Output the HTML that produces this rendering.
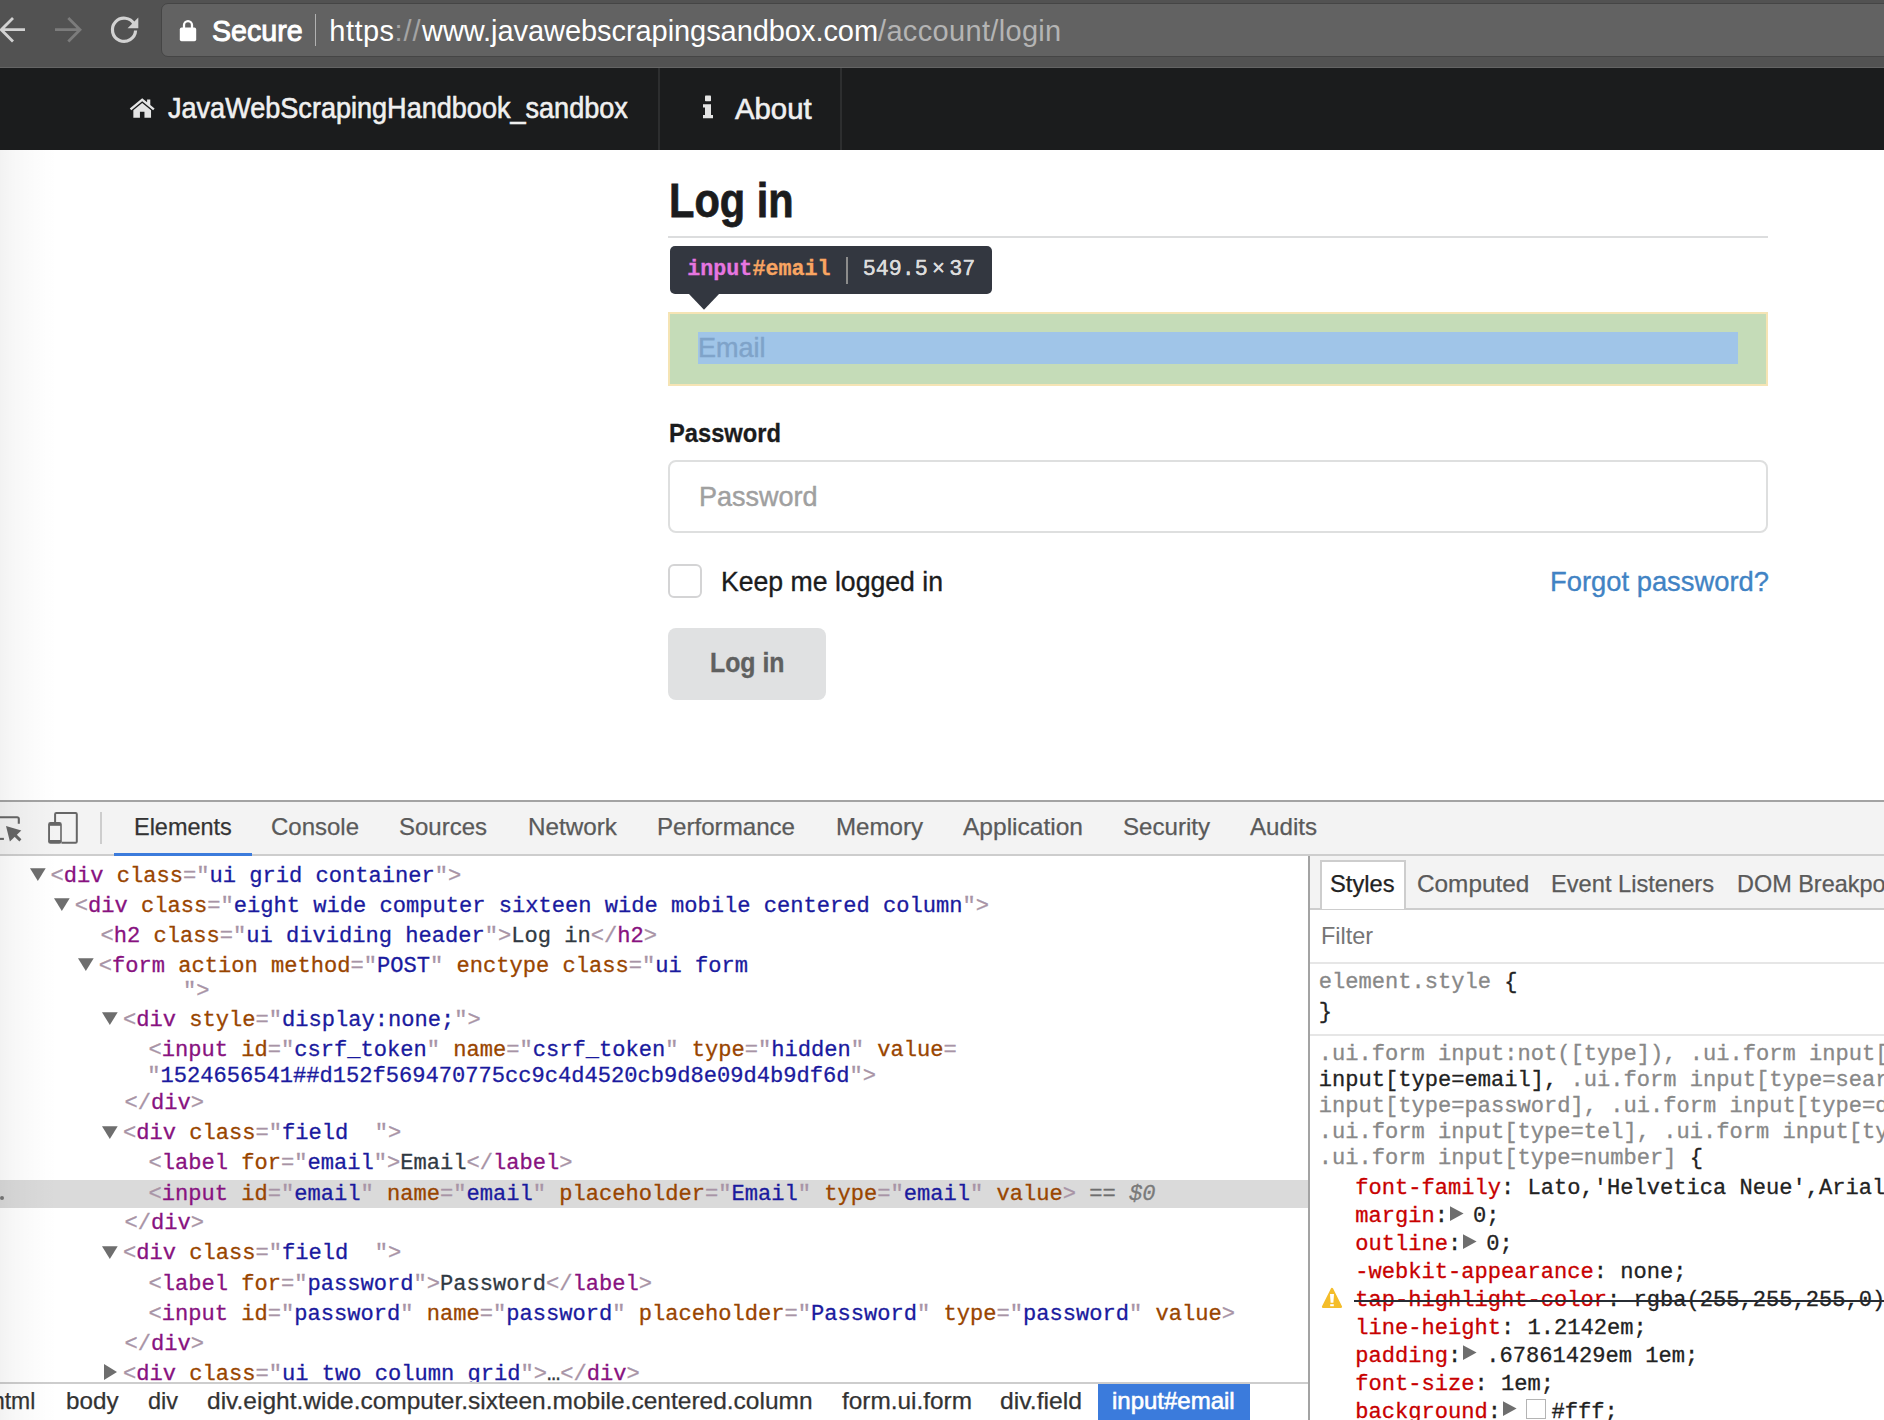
<!DOCTYPE html>
<html><head><meta charset="utf-8"><title>Log in</title>
<style>
html,body{margin:0;padding:0;background:#fff;width:1884px;height:1420px;overflow:hidden;}
body{position:relative;font-family:"Liberation Sans",sans-serif;}
#root{position:absolute;left:0;top:0;width:1884px;height:1420px;overflow:hidden;background:#fff;}
.t{position:absolute;white-space:pre;transform-origin:0 50%;}
.b{position:absolute;box-sizing:border-box;}
.s{font-family:"Liberation Sans",sans-serif;}
.m{font-family:"Liberation Mono",monospace;-webkit-text-stroke-width:0.3px;}
svg{position:absolute;overflow:visible;}
.p{color:#a894a6}.n{color:#881280}.a{color:#994500}.v{color:#1a1a9e}.x{color:#303942}
.g{color:#888}.r{color:#c80000}.k{color:#222}
</style></head><body><div id="root">

<div class="b" style="left:0px;top:0px;width:1884px;height:68px;background:#525252;"></div>
<div class="b" style="left:0px;top:66.5px;width:1884px;height:1.5px;background:#646464;"></div>
<div class="b" style="left:161px;top:3.2px;width:1740px;height:53.4px;background:#626262;border:1.6px solid #454545;border-radius:7px;"></div>
<svg style="left:0;top:0" width="160" height="68" viewBox="0 0 160 68" fill="none" stroke-linecap="butt" stroke-linejoin="miter"><path d="M25 29.7H1.5M13 18L1.3 29.7L13 41.4" stroke="#d2d2d2" stroke-width="2.8"/><path d="M55 29.7H79.5M68.3 18L80 29.7L68.3 41.4" stroke="#7c7c7c" stroke-width="2.8"/><path d="M134.2 24.2A11.6 11.6 0 1 0 135.6 30.5" stroke="#d2d2d2" stroke-width="3.2"/><path d="M138.3 17.6V28.3H127.6Z" fill="#d2d2d2" stroke="none"/></svg>
<svg style="left:176px;top:16px" width="24" height="28" viewBox="0 0 24 28"><rect x="3.8" y="11.6" width="16.4" height="13.6" rx="1.8" fill="#fff"/><path d="M8 12.5V9.1a4 4 0 0 1 8 0V12.5" fill="none" stroke="#fff" stroke-width="2.3"/></svg>
<div class="t s" style="left:211.7px;top:12.25px;line-height:38px;font-size:29px;color:#fff;transform:scaleX(0.9860);-webkit-text-stroke:0.95px #fff;">Secure</div>
<div class="b" style="left:314.9px;top:14px;width:1.4px;height:32px;background:#b2b2b2;"></div>
<div class="t s" style="left:329.3px;top:12.45px;line-height:38px;font-size:29px;color:#fff;letter-spacing:0.45px;">https</div>
<div class="t s" style="left:394.5px;top:12.45px;line-height:38px;font-size:29px;color:#a4a4a4;letter-spacing:1.0px;">://</div>
<div class="t s" style="left:422px;top:12.45px;line-height:38px;font-size:29px;color:#fff;letter-spacing:-0.06px;">www.javawebscrapingsandbox.com</div>
<div class="t s" style="left:878px;top:12.45px;line-height:38px;font-size:29px;color:#b4b4b4;letter-spacing:0.33px;">/account/login</div>
<div class="b" style="left:0px;top:68px;width:1884px;height:82px;background:#1b1c1d;"></div>
<div class="b" style="left:658px;top:68px;width:2px;height:82px;background:#2d2e2f;"></div>
<div class="b" style="left:840px;top:68px;width:2px;height:82px;background:#2d2e2f;"></div>
<svg style="left:128.6px;top:96.6px" width="26.4" height="22.6" viewBox="0 0 28 24"><path d="M14 1.2L0.8 12.2L2.4 14L14 4.4L25.6 14L27.2 12.2L22.6 8.4V2.6H19.2V5.6Z" fill="#e4e4e4"/><path d="M14 6.4L4.6 14.2V22H11.6V15.6H16.4V22H23.4V14.2Z" fill="#e4e4e4"/></svg>
<div class="t s" style="left:167.7px;top:90.29px;line-height:37px;font-size:28.6px;color:#f0f0f0;transform:scaleX(0.9463);-webkit-text-stroke:0.6px #f0f0f0;">JavaWebScrapingHandbook_sandbox</div>
<svg style="left:702px;top:95px" width="12" height="24" viewBox="0 0 12 24"><rect x="3" y="0.6" width="6" height="5.6" rx="0.8" fill="#e4e4e4"/><path d="M1 9.2H9V20H11V23.3H1V20H3V12.4H1Z" fill="#e4e4e4"/></svg>
<div class="t s" style="left:734.6px;top:89.55px;line-height:38px;font-size:29.3px;color:#f0f0f0;transform:scaleX(1.0005);-webkit-text-stroke:0.6px #f0f0f0;">About</div>
<div class="t s" style="left:669.4px;top:170.37px;line-height:62px;font-size:48px;color:#1b1c1d;font-weight:bold;transform:scaleX(0.8656);-webkit-text-stroke:0.8px #1b1c1d;">Log in</div>
<div class="b" style="left:668px;top:236px;width:1100px;height:2px;background:#dcddde;"></div>
<div class="b" style="left:670px;top:246px;width:322px;height:48px;background:#333740;border-radius:5px;"></div>
<svg style="left:688px;top:293px" width="32" height="17" viewBox="0 0 32 17"><path d="M0 0H32L16 16.7Z" fill="#333740"/></svg>
<div class="t m" style="left:687.3px;top:256.41px;line-height:28px;font-size:21.7px;color:#000;font-weight:bold;"><span style="color:#e776e0">input</span><span style="color:#f9a562">#email</span></div>
<div class="b" style="left:846px;top:256.5px;width:2px;height:27px;background:#8c8c8c;"></div>
<div class="t m" style="left:862.7px;top:256.41px;line-height:28px;font-size:21.7px;color:#dcdcdc;text-shadow:0 0 0.5px #dcdcdc;">549.5<span style="display:inline-block;margin:0 4.2px">&times;</span>37</div>
<div class="b" style="left:668px;top:312.1px;width:1100px;height:73.8px;background:#f5e4b4;"></div>
<div class="b" style="left:670px;top:314px;width:1096px;height:70.2px;background:#c5dcb8;"></div>
<div class="b" style="left:698px;top:332px;width:1040px;height:32px;background:#a0c5e8;"></div>
<div class="t s" style="left:698.4px;top:329.80px;line-height:36px;font-size:28px;color:#7fa3c9;transform:scaleX(0.9655);-webkit-text-stroke:0.45px #7fa3c9;">Email</div>
<div class="t s" style="left:668.6px;top:416.39px;line-height:34px;font-size:26px;color:#1b1c1d;font-weight:bold;transform:scaleX(0.9118);-webkit-text-stroke:0.3px #1b1c1d;">Password</div>
<div class="b" style="left:668px;top:460px;width:1100px;height:73px;background:#fff;border:2px solid #dedfdf;border-radius:8px;"></div>
<div class="t s" style="left:699.3px;top:479.00px;line-height:36px;font-size:28px;color:#a0a0a0;transform:scaleX(0.9647);-webkit-text-stroke:0.45px #a0a0a0;">Password</div>
<div class="b" style="left:668px;top:564.2px;width:33.8px;height:33.5px;background:#fff;border:2px solid #d4d4d5;border-radius:6px;"></div>
<div class="t s" style="left:721px;top:563.60px;line-height:36px;font-size:28px;color:#1b1c1d;transform:scaleX(0.9507);-webkit-text-stroke:0.35px #1b1c1d;">Keep me logged in</div>
<div class="t s" style="left:1550px;top:563.60px;line-height:36px;font-size:28px;color:#4183c4;transform:scaleX(0.9772);-webkit-text-stroke:0.35px #4183c4;">Forgot password?</div>
<div class="b" style="left:668px;top:628px;width:158px;height:72px;background:#e0e1e2;border-radius:8px;"></div>
<div class="t s" style="left:710px;top:645.30px;line-height:36px;font-size:28px;color:#5f6060;font-weight:bold;transform:scaleX(0.8871);-webkit-text-stroke:0.35px #5f6060;">Log in</div>
<div class="b" style="left:0px;top:800px;width:1884px;height:2px;background:#a3a3a3;"></div>
<div class="b" style="left:0px;top:802px;width:1884px;height:52px;background:#f3f3f3;"></div>
<div class="b" style="left:0px;top:854px;width:1884px;height:2px;background:#cdcdcd;"></div>
<svg style="left:0;top:800px" width="120" height="60" viewBox="0 0 120 60" fill="none"><path d="M0 17.2H17.2a1.6 1.6 0 0 1 1.6 1.6V23.8" stroke="#666" stroke-width="2.1"/><path d="M0 38.9H3.9" stroke="#666" stroke-width="2.1"/><path d="M6 26.1L21.3 30.6L9.9 41.4Z" fill="#666"/><path d="M13.5 33.6L20.4 40.4" stroke="#666" stroke-width="2.9"/><path d="M55.1 22.5V14.2a1.2 1.2 0 0 1 1.2-1.2H75.6a1.2 1.2 0 0 1 1.2 1.2V41.6a1.2 1.2 0 0 1-1.2 1.2H61.5" stroke="#666" stroke-width="2"/><rect x="48.1" y="22" width="13.7" height="21.8" rx="2.4" fill="#666"/><rect x="50" y="25.8" width="10.2" height="14.2" fill="#f3f3f3"/></svg>
<div class="b" style="left:99.9px;top:812px;width:2px;height:32px;background:#cdcdcd;"></div>
<div class="t s" style="left:134px;top:811.38px;line-height:31px;font-size:24px;color:#333;transform:scaleX(0.9775);-webkit-text-stroke-width:0.25px;">Elements</div>
<div class="t s" style="left:271px;top:811.38px;line-height:31px;font-size:24px;color:#5a5a5a;transform:scaleX(0.9993);-webkit-text-stroke-width:0.25px;">Console</div>
<div class="t s" style="left:399px;top:811.38px;line-height:31px;font-size:24px;color:#5a5a5a;transform:scaleX(0.9995);-webkit-text-stroke-width:0.25px;">Sources</div>
<div class="t s" style="left:528px;top:811.38px;line-height:31px;font-size:24px;color:#5a5a5a;transform:scaleX(1.0110);-webkit-text-stroke-width:0.25px;">Network</div>
<div class="t s" style="left:657px;top:811.38px;line-height:31px;font-size:24px;color:#5a5a5a;transform:scaleX(1.0044);-webkit-text-stroke-width:0.25px;">Performance</div>
<div class="t s" style="left:836px;top:811.38px;line-height:31px;font-size:24px;color:#5a5a5a;transform:scaleX(1.0038);-webkit-text-stroke-width:0.25px;">Memory</div>
<div class="t s" style="left:963px;top:811.38px;line-height:31px;font-size:24px;color:#5a5a5a;transform:scaleX(1.0220);-webkit-text-stroke-width:0.25px;">Application</div>
<div class="t s" style="left:1123px;top:811.38px;line-height:31px;font-size:24px;color:#5a5a5a;transform:scaleX(1.0034);-webkit-text-stroke-width:0.25px;">Security</div>
<div class="t s" style="left:1250px;top:811.38px;line-height:31px;font-size:24px;color:#5a5a5a;transform:scaleX(1.0045);-webkit-text-stroke-width:0.25px;">Audits</div>
<div class="b" style="left:114px;top:852.8px;width:138px;height:3.2px;background:#3b7bdc;"></div>
<div class="b" style="left:0px;top:1180px;width:1308px;height:28px;background:#dadada;"></div>
<div class="b" style="left:0px;top:1196px;width:4px;height:4px;background:#777;border-radius:2px;"></div>
<svg style="left:30.2px;top:868.2px" width="15.7" height="13.4" viewBox="0 0 16 13"><path d="M0 0H16L8 13Z" fill="#6e6e6e"/></svg>
<div class="t m" style="left:50.4px;top:861.92px;line-height:29px;font-size:22.09px;color:#000;"><span class="p">&lt;</span><span class="n">div</span> <span class="a">class</span><span class="p">=&quot;</span><span class="v">ui grid container</span><span class="p">&quot;</span><span class="p">&gt;</span></div>
<svg style="left:54.2px;top:898.1px" width="15.7" height="13.4" viewBox="0 0 16 13"><path d="M0 0H16L8 13Z" fill="#6e6e6e"/></svg>
<div class="t m" style="left:74.7px;top:891.82px;line-height:29px;font-size:22.09px;color:#000;"><span class="p">&lt;</span><span class="n">div</span> <span class="a">class</span><span class="p">=&quot;</span><span class="v">eight wide computer sixteen wide mobile centered column</span><span class="p">&quot;</span><span class="p">&gt;</span></div>
<div class="t m" style="left:100.5px;top:921.72px;line-height:29px;font-size:22.09px;color:#000;"><span class="p">&lt;</span><span class="n">h2</span> <span class="a">class</span><span class="p">=&quot;</span><span class="v">ui dividing header</span><span class="p">&quot;</span><span class="p">&gt;</span><span class="x">Log in</span><span class="p">&lt;/</span><span class="n">h2</span><span class="p">&gt;</span></div>
<svg style="left:78.3px;top:957.8px" width="15.7" height="13.4" viewBox="0 0 16 13"><path d="M0 0H16L8 13Z" fill="#6e6e6e"/></svg>
<div class="t m" style="left:98.8px;top:951.52px;line-height:29px;font-size:22.09px;color:#000;"><span class="p">&lt;</span><span class="n">form</span> <span class="a">action</span> <span class="a">method</span><span class="p">=&quot;</span><span class="v">POST</span><span class="p">&quot;</span> <span class="a">enctype</span> <span class="a">class</span><span class="p">=&quot;</span><span class="v">ui form</span></div>
<div class="t m" style="left:183.0px;top:977.02px;line-height:29px;font-size:22.09px;color:#000;"><span class="p">&quot;&gt;</span></div>
<svg style="left:102.2px;top:1012.1px" width="15.7" height="13.4" viewBox="0 0 16 13"><path d="M0 0H16L8 13Z" fill="#6e6e6e"/></svg>
<div class="t m" style="left:123.1px;top:1005.82px;line-height:29px;font-size:22.09px;color:#000;"><span class="p">&lt;</span><span class="n">div</span> <span class="a">style</span><span class="p">=&quot;</span><span class="v">display:none;</span><span class="p">&quot;</span><span class="p">&gt;</span></div>
<div class="t m" style="left:148.5px;top:1035.72px;line-height:29px;font-size:22.09px;color:#000;"><span class="p">&lt;</span><span class="n">input</span> <span class="a">id</span><span class="p">=&quot;</span><span class="v">csrf_token</span><span class="p">&quot;</span> <span class="a">name</span><span class="p">=&quot;</span><span class="v">csrf_token</span><span class="p">&quot;</span> <span class="a">type</span><span class="p">=&quot;</span><span class="v">hidden</span><span class="p">&quot;</span> <span class="a">value</span><span class="p">=</span></div>
<div class="t m" style="left:147.2px;top:1061.72px;line-height:29px;font-size:22.09px;color:#000;"><span class="p">&quot;</span><span class="v">1524656541##d152f569470775cc9c4d4520cb9d8e09d4b9df6d</span><span class="p">&quot;&gt;</span></div>
<div class="t m" style="left:124.39999999999999px;top:1088.82px;line-height:29px;font-size:22.09px;color:#000;"><span class="p">&lt;/</span><span class="n">div</span><span class="p">&gt;</span></div>
<svg style="left:102.2px;top:1125.7px" width="15.7" height="13.4" viewBox="0 0 16 13"><path d="M0 0H16L8 13Z" fill="#6e6e6e"/></svg>
<div class="t m" style="left:123.1px;top:1119.42px;line-height:29px;font-size:22.09px;color:#000;"><span class="p">&lt;</span><span class="n">div</span> <span class="a">class</span><span class="p">=&quot;</span><span class="v">field  </span><span class="p">&quot;</span><span class="p">&gt;</span></div>
<div class="t m" style="left:148.5px;top:1149.42px;line-height:29px;font-size:22.09px;color:#000;"><span class="p">&lt;</span><span class="n">label</span> <span class="a">for</span><span class="p">=&quot;</span><span class="v">email</span><span class="p">&quot;</span><span class="p">&gt;</span><span class="x">Email</span><span class="p">&lt;/</span><span class="n">label</span><span class="p">&gt;</span></div>
<div class="t m" style="left:148.5px;top:1179.62px;line-height:29px;font-size:22.09px;color:#000;"><span class="p">&lt;</span><span class="n">input</span> <span class="a">id</span><span class="p">=&quot;</span><span class="v">email</span><span class="p">&quot;</span> <span class="a">name</span><span class="p">=&quot;</span><span class="v">email</span><span class="p">&quot;</span> <span class="a">placeholder</span><span class="p">=&quot;</span><span class="v">Email</span><span class="p">&quot;</span> <span class="a">type</span><span class="p">=&quot;</span><span class="v">email</span><span class="p">&quot;</span> <span class="a">value</span><span class="p">&gt;</span><span style="color:#6e6e6e"> == </span><span style="color:#7a7a7a;font-style:italic">$0</span></div>
<div class="t m" style="left:124.39999999999999px;top:1209.42px;line-height:29px;font-size:22.09px;color:#000;"><span class="p">&lt;/</span><span class="n">div</span><span class="p">&gt;</span></div>
<svg style="left:102.2px;top:1245.6px" width="15.7" height="13.4" viewBox="0 0 16 13"><path d="M0 0H16L8 13Z" fill="#6e6e6e"/></svg>
<div class="t m" style="left:123.1px;top:1239.32px;line-height:29px;font-size:22.09px;color:#000;"><span class="p">&lt;</span><span class="n">div</span> <span class="a">class</span><span class="p">=&quot;</span><span class="v">field  </span><span class="p">&quot;</span><span class="p">&gt;</span></div>
<div class="t m" style="left:148.5px;top:1269.62px;line-height:29px;font-size:22.09px;color:#000;"><span class="p">&lt;</span><span class="n">label</span> <span class="a">for</span><span class="p">=&quot;</span><span class="v">password</span><span class="p">&quot;</span><span class="p">&gt;</span><span class="x">Password</span><span class="p">&lt;/</span><span class="n">label</span><span class="p">&gt;</span></div>
<div class="t m" style="left:148.5px;top:1299.62px;line-height:29px;font-size:22.09px;color:#000;"><span class="p">&lt;</span><span class="n">input</span> <span class="a">id</span><span class="p">=&quot;</span><span class="v">password</span><span class="p">&quot;</span> <span class="a">name</span><span class="p">=&quot;</span><span class="v">password</span><span class="p">&quot;</span> <span class="a">placeholder</span><span class="p">=&quot;</span><span class="v">Password</span><span class="p">&quot;</span> <span class="a">type</span><span class="p">=&quot;</span><span class="v">password</span><span class="p">&quot;</span> <span class="a">value</span><span class="p">&gt;</span></div>
<div class="t m" style="left:124.39999999999999px;top:1329.82px;line-height:29px;font-size:22.09px;color:#000;"><span class="p">&lt;/</span><span class="n">div</span><span class="p">&gt;</span></div>
<svg style="left:104.2px;top:1364px" width="13" height="16" viewBox="0 0 13 16"><path d="M0 0V16L13 8.0Z" fill="#6e6e6e"/></svg>
<div class="t m" style="left:123.1px;top:1359.62px;line-height:29px;font-size:22.09px;color:#000;"><span class="p">&lt;</span><span class="n">div</span> <span class="a">class</span><span class="p">=&quot;</span><span class="v">ui two column grid</span><span class="p">&quot;</span><span class="p">&gt;</span><span class="x">…</span><span class="p">&lt;/</span><span class="n">div</span><span class="p">&gt;</span></div>
<div class="b" style="left:0px;top:1382px;width:1308px;height:38px;background:#fff;"></div>
<div class="b" style="left:0px;top:1382px;width:1308px;height:2px;background:#cdcdcd;"></div>
<div class="b" style="left:1098px;top:1384px;width:152px;height:36px;background:#3b7bdc;"></div>
<div class="t s" style="left:-8px;top:1385.18px;line-height:31px;font-size:24px;color:#333;transform:scaleX(0.9549);-webkit-text-stroke-width:0.25px;">html</div>
<div class="t s" style="left:65.7px;top:1385.18px;line-height:31px;font-size:24px;color:#333;transform:scaleX(1.0087);-webkit-text-stroke-width:0.25px;">body</div>
<div class="t s" style="left:148px;top:1385.18px;line-height:31px;font-size:24px;color:#333;transform:scaleX(0.9776);-webkit-text-stroke-width:0.25px;">div</div>
<div class="t s" style="left:207.3px;top:1385.18px;line-height:31px;font-size:24px;color:#333;transform:scaleX(1.0209);-webkit-text-stroke-width:0.25px;">div.eight.wide.computer.sixteen.mobile.centered.column</div>
<div class="t s" style="left:841.5px;top:1385.18px;line-height:31px;font-size:24px;color:#333;transform:scaleX(1.0155);-webkit-text-stroke-width:0.25px;">form.ui.form</div>
<div class="t s" style="left:1000.4px;top:1385.18px;line-height:31px;font-size:24px;color:#333;transform:scaleX(1.0302);-webkit-text-stroke-width:0.25px;">div.field</div>
<div class="t s" style="left:1112px;top:1385.18px;line-height:31px;font-size:24px;color:#fff;transform:scaleX(0.9996);-webkit-text-stroke-width:0.6px;">input#email</div>
<div class="b" style="left:1307.6px;top:856px;width:2.4px;height:564px;background:#a3a3a3;"></div>
<div class="b" style="left:1310px;top:856px;width:574px;height:52px;background:#f3f3f3;"></div>
<div class="b" style="left:1310px;top:908px;width:574px;height:2px;background:#cdcdcd;"></div>
<div class="b" style="left:1310px;top:910px;width:574px;height:510px;background:#fff;"></div>
<div class="b" style="left:1320px;top:860px;width:86px;height:48.5px;background:#fff;border:2px solid #cdcdcd;border-bottom:none;"></div>
<div class="t s" style="left:1330.2px;top:867.58px;line-height:31px;font-size:24px;color:#222;transform:scaleX(0.9869);-webkit-text-stroke-width:0.25px;">Styles</div>
<div class="t s" style="left:1416.5px;top:867.58px;line-height:31px;font-size:24px;color:#5a5a5a;transform:scaleX(1.0141);-webkit-text-stroke-width:0.25px;">Computed</div>
<div class="t s" style="left:1551.3px;top:867.58px;line-height:31px;font-size:24px;color:#5a5a5a;transform:scaleX(0.9854);-webkit-text-stroke-width:0.25px;">Event Listeners</div>
<div class="t s" style="left:1737px;top:867.58px;line-height:31px;font-size:24px;color:#5a5a5a;transform:scaleX(0.9767);-webkit-text-stroke-width:0.25px;">DOM Breakpoints</div>
<div class="t s" style="left:1320.7px;top:919.68px;line-height:31px;font-size:24px;color:#757575;transform:scaleX(0.9786);">Filter</div>
<div class="b" style="left:1310px;top:962px;width:574px;height:2px;background:#e6e6e6;"></div>
<div class="t m" style="left:1318.8px;top:967.72px;line-height:29px;font-size:22.09px;color:#000;"><span class="g">element.style</span><span class="k"> {</span></div>
<div class="t m" style="left:1318.8px;top:997.52px;line-height:29px;font-size:22.09px;color:#000;"><span class="k">}</span></div>
<div class="b" style="left:1310px;top:1034px;width:574px;height:2px;background:#e6e6e6;"></div>
<div class="t m" style="left:1318.8px;top:1039.92px;line-height:29px;font-size:22.09px;color:#000;"><span class="g">.ui.form input:not([type]), .ui.form input[type=date],</span></div>
<div class="t m" style="left:1318.8px;top:1065.92px;line-height:29px;font-size:22.09px;color:#000;"><span class="k">input[type=email],</span><span class="g"> .ui.form input[type=search],</span></div>
<div class="t m" style="left:1318.8px;top:1091.92px;line-height:29px;font-size:22.09px;color:#000;"><span class="g">input[type=password], .ui.form input[type=datetime-local],</span></div>
<div class="t m" style="left:1318.8px;top:1117.92px;line-height:29px;font-size:22.09px;color:#000;"><span class="g">.ui.form input[type=tel], .ui.form input[type=text],</span></div>
<div class="t m" style="left:1318.8px;top:1143.72px;line-height:29px;font-size:22.09px;color:#000;"><span class="g">.ui.form input[type=number]</span><span class="k"> {</span></div>
<div class="t m" style="left:1355.2px;top:1173.92px;line-height:29px;font-size:22.09px;color:#000;"><span class="r">font-family</span><span class="k">: Lato,'Helvetica Neue',Arial,Helvetica,sans-serif;</span></div>
<div class="t m" style="left:1355.2px;top:1201.92px;line-height:29px;font-size:22.09px;color:#000;"><span class="r">margin</span><span class="k">:<span style="display:inline-block;width:25px;height:1px;position:relative"><svg style="left:1.6px;top:-15.2px" width="13.6" height="15.2" viewBox="0 0 14 15"><path d="M0 0V15L14 7.5Z" fill="#6e6e6e"/></svg></span>0;</span></div>
<div class="t m" style="left:1355.2px;top:1229.82px;line-height:29px;font-size:22.09px;color:#000;"><span class="r">outline</span><span class="k">:<span style="display:inline-block;width:25px;height:1px;position:relative"><svg style="left:1.6px;top:-15.2px" width="13.6" height="15.2" viewBox="0 0 14 15"><path d="M0 0V15L14 7.5Z" fill="#6e6e6e"/></svg></span>0;</span></div>
<div class="t m" style="left:1355.2px;top:1257.72px;line-height:29px;font-size:22.09px;color:#000;"><span class="r">-webkit-appearance</span><span class="k">: none;</span></div>
<div class="t m" style="left:1355.2px;top:1285.72px;line-height:29px;font-size:22.09px;color:#000;"><span class="r">tap-highlight-color</span><span class="k">: rgba(255,255,255,0);</span></div>
<div class="t m" style="left:1355.2px;top:1313.72px;line-height:29px;font-size:22.09px;color:#000;"><span class="r">line-height</span><span class="k">: 1.2142em;</span></div>
<div class="t m" style="left:1355.2px;top:1341.62px;line-height:29px;font-size:22.09px;color:#000;"><span class="r">padding</span><span class="k">:<span style="display:inline-block;width:25px;height:1px;position:relative"><svg style="left:1.6px;top:-15.2px" width="13.6" height="15.2" viewBox="0 0 14 15"><path d="M0 0V15L14 7.5Z" fill="#6e6e6e"/></svg></span>.67861429em 1em;</span></div>
<div class="t m" style="left:1355.2px;top:1369.62px;line-height:29px;font-size:22.09px;color:#000;"><span class="r">font-size</span><span class="k">: 1em;</span></div>
<div class="t m" style="left:1355.2px;top:1397.52px;line-height:29px;font-size:22.09px;color:#000;"><span class="r">background</span><span class="k">:<span style="display:inline-block;width:25px;height:1px;position:relative"><svg style="left:1.6px;top:-15.2px" width="13.6" height="15.2" viewBox="0 0 14 15"><path d="M0 0V15L14 7.5Z" fill="#6e6e6e"/></svg></span><span style="display:inline-block;width:25.5px;height:1px;position:relative"><span style="position:absolute;left:0.2px;top:-17.2px;width:19.8px;height:19.8px;box-sizing:border-box;border:1.8px solid #b4b4b4;background:#fff"></span></span>#fff;</span></div>
<svg style="left:1320px;top:1286px" width="24" height="24" viewBox="0 0 24 24"><path d="M12 3.1L20.9 20.8H3.1Z" fill="#f4bd2a" stroke="#f4bd2a" stroke-width="2.4" stroke-linejoin="round"/><path d="M10 8H14L13.4 16.7H10.6Z" fill="#fff"/><rect x="10.2" y="18.2" width="3.6" height="2" fill="#fff"/></svg>
<div class="b" style="left:1354px;top:1300.2px;width:540px;height:1.9px;background:#272c33;"></div>
<div class="b" style="left:0px;top:150px;width:60px;height:1270px;background:linear-gradient(to right,rgba(0,0,0,0.052),rgba(0,0,0,0.032) 22%,rgba(0,0,0,0.014) 52%,rgba(0,0,0,0.004) 80%,rgba(0,0,0,0));pointer-events:none;"></div>
</div></body></html>
